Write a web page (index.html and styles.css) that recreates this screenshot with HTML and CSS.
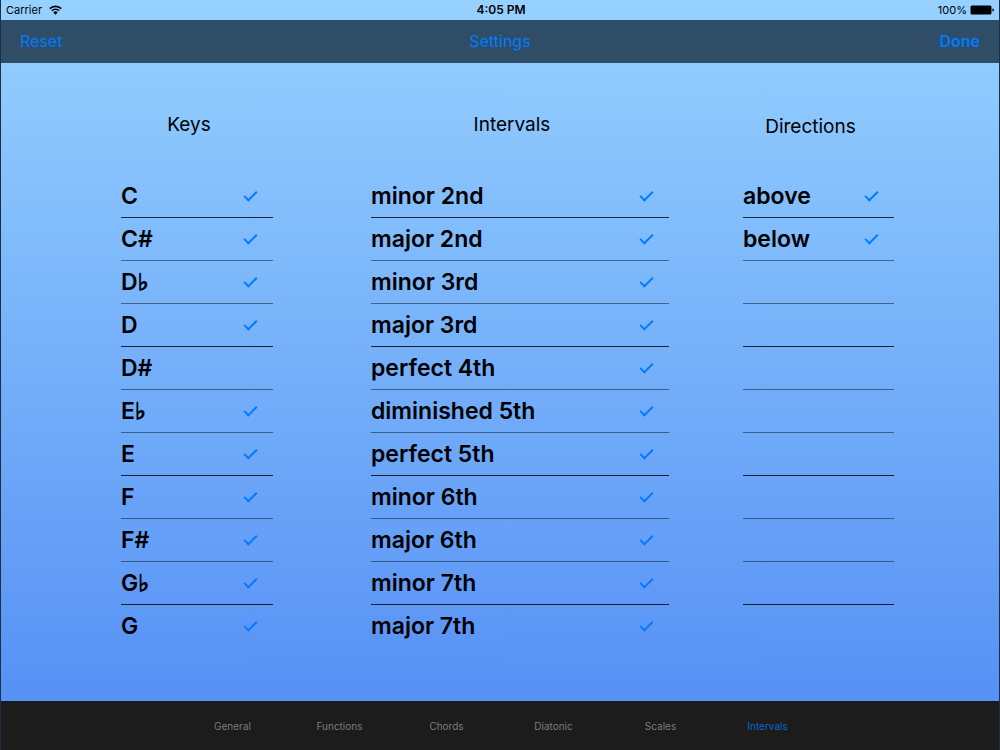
FILE: index.html
```html
<!DOCTYPE html>
<html lang="en">
<head>
    <meta charset="UTF-8">
    <meta name="viewport" content="width=device-width, initial-scale=1.0">
    <link rel="stylesheet" href="styles.css">
    <title>Settings</title>
</head>
<body>
    <div class="app">
      <div class="status-bar">
        <div class="carrier">
          <span>Carrier</span>
          <svg class="wifi" viewBox="0 0 12 9" aria-hidden="true">
            <path d="M0.7 3.3a7.6 7.6 0 0 1 10.6 0M2.6 5.2a4.9 4.9 0 0 1 6.8 0" fill="none" stroke="#000" stroke-width="1.5"/>
            <path d="M4 6.7a2.9 2.9 0 0 1 4 0L6 8.8z"/>
          </svg>
        </div>
        <div class="clock">4:05 PM</div>
        <div class="battery">
          <span>100%</span>
          <svg class="battery-icon" viewBox="0 0 24 10" aria-hidden="true">
            <rect x="0.5" y="0.5" width="21" height="9" rx="1.5"/>
            <path d="M22.5 3.2q1.5 0.6 1.5 1.8t-1.5 1.8z"/>
          </svg>
        </div>
      </div>
      <header class="nav-bar">
        <button class="nav-button" type="button">Reset</button>
        <h1 class="nav-title">Settings</h1>
        <button class="nav-button nav-done" type="button">Done</button>
      </header>
      <main class="settings">
        <section class="column keys">
          <h2 class="column-title">Keys</h2>
          <ul class="options">
            <li><label class="option"><span>C</span><input type="checkbox" checked></label></li>
            <li><label class="option"><span>C#</span><input type="checkbox" checked></label></li>
            <li><label class="option"><span>D<span class="flat">♭</span></span><input type="checkbox" checked></label></li>
            <li><label class="option"><span>D</span><input type="checkbox" checked></label></li>
            <li><label class="option"><span>D#</span><input type="checkbox"></label></li>
            <li><label class="option"><span>E<span class="flat">♭</span></span><input type="checkbox" checked></label></li>
            <li><label class="option"><span>E</span><input type="checkbox" checked></label></li>
            <li><label class="option"><span>F</span><input type="checkbox" checked></label></li>
            <li><label class="option"><span>F#</span><input type="checkbox" checked></label></li>
            <li><label class="option"><span>G<span class="flat">♭</span></span><input type="checkbox" checked></label></li>
            <li><label class="option"><span>G</span><input type="checkbox" checked></label></li>
          </ul>
        </section>
        <section class="column intervals">
          <h2 class="column-title">Intervals</h2>
          <ul class="options">
            <li><label class="option"><span>minor 2nd</span><input type="checkbox" checked></label></li>
            <li><label class="option"><span>major 2nd</span><input type="checkbox" checked></label></li>
            <li><label class="option"><span>minor 3rd</span><input type="checkbox" checked></label></li>
            <li><label class="option"><span>major 3rd</span><input type="checkbox" checked></label></li>
            <li><label class="option"><span>perfect 4th</span><input type="checkbox" checked></label></li>
            <li><label class="option"><span>diminished 5th</span><input type="checkbox" checked></label></li>
            <li><label class="option"><span>perfect 5th</span><input type="checkbox" checked></label></li>
            <li><label class="option"><span>minor 6th</span><input type="checkbox" checked></label></li>
            <li><label class="option"><span>major 6th</span><input type="checkbox" checked></label></li>
            <li><label class="option"><span>minor 7th</span><input type="checkbox" checked></label></li>
            <li><label class="option"><span>major 7th</span><input type="checkbox" checked></label></li>
          </ul>
        </section>
        <section class="column directions">
          <h2 class="column-title column-title-low">Directions</h2>
          <ul class="options">
            <li><label class="option"><span>above</span><input type="checkbox" checked></label></li>
            <li><label class="option"><span>below</span><input type="checkbox" checked></label></li>
            <!-- empty rows keep their separators -->
            <li></li>
            <li></li>
            <li></li>
            <li></li>
            <li></li>
            <li></li>
            <li></li>
            <li></li>
            <li></li>
          </ul>
        </section>
      </main>
      <nav class="tab-bar">
        <a class="tab" href="#general">General</a>
        <a class="tab" href="#functions">Functions</a>
        <a class="tab" href="#chords">Chords</a>
        <a class="tab" href="#diatonic">Diatonic</a>
        <a class="tab" href="#scales">Scales</a>
        <a class="tab tab-active" href="#intervals">Intervals</a>
      </nav>
    </div>
</body>
</html>
```

FILE: styles.css
```css
* {
  box-sizing: border-box;
}
html,body {
  margin: 0;
  padding: 0;
}
body {
  font-family: Inter, "Liberation Sans", "DejaVu Sans", sans-serif;
  color: #000;
}
.app {
  display: flex;
  flex-direction: column;
  min-height: 100vh;
  border: solid #1b3044;
  border-width: 0 1px;
  background: linear-gradient(#96d1ff, #528cf4);
}
.status-bar {
  display: grid;
  grid-template-columns: 1fr auto 1fr;
  align-items: center;
  height: 20px;
  padding: 0 5px;
  font-size: 11px;
  line-height: 20px;
}
.carrier,
.battery {
  display: flex;
  align-items: center;
  gap: 7px;
}
.battery {
  justify-content: flex-end;
  gap: 3px;
}
.clock {
  padding-left: 2px;
  font-size: 12px;
  font-weight: 600;
}
.wifi {
  width: 13px;
  height: 10px;
}
.battery-icon {
  width: 24px;
  height: 10px;
}
.nav-bar {
  display: grid;
  grid-template-columns: 1fr auto 1fr;
  align-items: center;
  height: 43px;
  padding: 0 19px 2px;
  background-color: #2f4d67;
  color: #007aff;
}
.nav-title {
  margin: 0;
  font-size: 16px;
  font-weight: 400;
}
.nav-button {
  justify-self: start;
  padding: 0;
  border: 0;
  background: none;
  color: inherit;
  font-family: inherit;
  font-size: 16px;
  cursor: pointer;
}
.nav-done {
  justify-self: end;
  font-weight: 600;
}
/* the lists sit on the even tracks, the odd ones are gutters */
.settings {
  flex: 1;
  display: grid;
  grid-template-columns: 120fr 152fr 98fr 298fr 74fr 151fr 105fr;
  padding: 48px 0 53px;
}
.keys {
  grid-column: 2;
}
.intervals {
  grid-column: 4;
}
.directions {
  grid-column: 6;
}
.column-title {
  height: 64px;
  margin: 0;
  padding-right: 16px;
  font-size: 19px;
  font-weight: 400;
  line-height: 28px;
  text-align: center;
}
.column-title-low {
  padding-top: 2px;
}
.options {
  margin: 0;
  padding: 0;
  list-style: none;
}
.options li {
  height: 43px;
  border-bottom: 1px solid rgba(0, 0, 0, 0.45);
}
.options li:nth-child(3n+1) {
  border-color: rgba(0, 0, 0, 0.8);
}
.options li:last-child {
  border-bottom: 0;
}
.option {
  display: flex;
  justify-content: space-between;
  align-items: center;
  height: 42px;
  padding: 1px 16px 0 0;
  font-size: 23px;
  font-weight: 600;
  line-height: 41px;
  white-space: nowrap;
  cursor: pointer;
}
.flat {
  font-family: "DejaVu Serif", serif;
  line-height: 1;
  -webkit-text-stroke: 1px #000;
}
.option input {
  display: flex;
  justify-content: center;
  align-items: center;
  width: 13px;
  height: 12px;
  margin: 0;
  padding-bottom: 4px;
  appearance: none;
  cursor: pointer;
}
.option input:checked::before {
  content: '';
  box-sizing: border-box;
  flex: none;
  width: 13px;
  height: 7px;
  border: solid #007aff;
  border-width: 0 0 2px 2px;
  transform: rotate(-45deg);
}
.tab-bar {
  display: flex;
  justify-content: center;
  height: 49px;
  padding-top: 2px;
  background-color: #1c1c1c;
}
.tab {
  width: 107px;
  color: #7b7b7b;
  font-size: 10px;
  line-height: 47px;
  text-align: center;
  text-decoration: none;
}
.tab-active {
  color: #0a66cf;
}
```
